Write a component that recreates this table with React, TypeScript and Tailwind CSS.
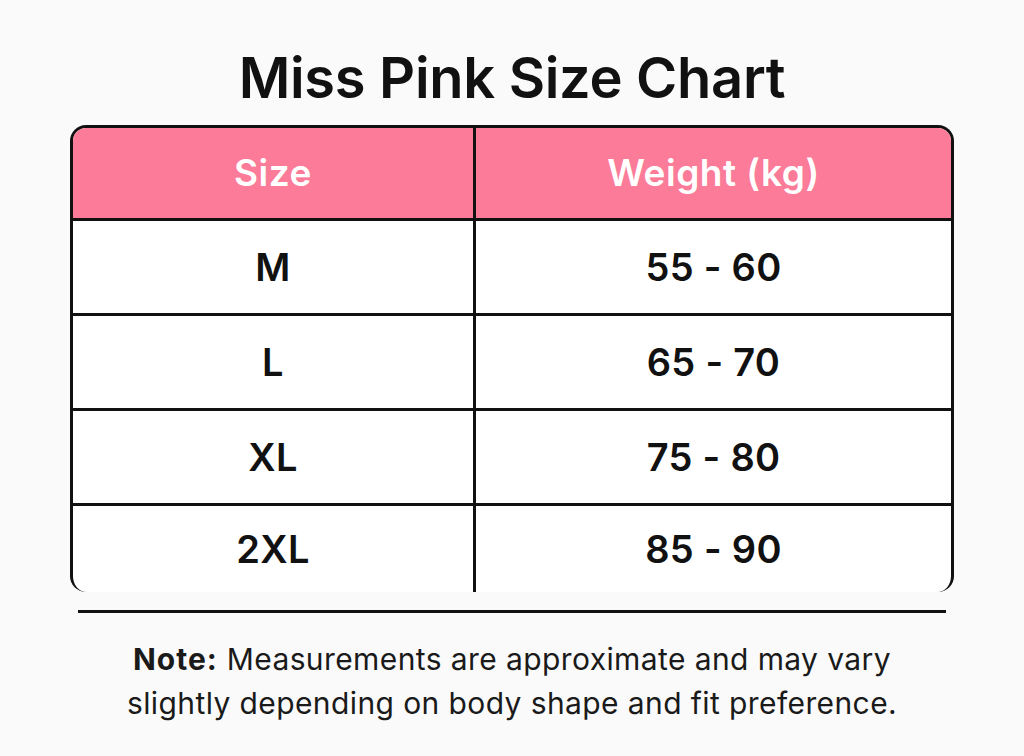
const rows = [
  { size: 'M', weight: '55 - 60' },
  { size: 'L', weight: '65 - 70' },
  { size: 'XL', weight: '75 - 80' },
  { size: '2XL', weight: '85 - 90' },
];

export default function App() {
  return (
    <div
      className="h-[756px] w-[1024px] bg-[#fafafa] text-[#111]"
      style={{ fontFamily: 'Inter, "Noto Sans", sans-serif' }}
    >
      <h1 className="pt-[44px] text-center text-[56px] font-semibold leading-[68px] tracking-[-0.3px]">
        Miss Pink Size Chart
      </h1>
      <div className="mx-[70px] mt-[13px]">
        <div className="rounded-[16px] border-x-[3px] border-t-[3px] border-[#111] bg-white">
          <div className="grid grid-cols-[403px_1fr] overflow-hidden rounded-t-[13px] bg-[#fb7b99] text-[37px] font-semibold tracking-[0.5px] text-white">
            <div className="flex h-[90px] items-center justify-center border-r-[3px] border-[#111]">Size</div>
            <div className="flex h-[90px] items-center justify-center">Weight (kg)</div>
          </div>
          {rows.map((row, i) => (
            <div
              key={row.size}
              className={`grid grid-cols-[403px_1fr] border-t-[3px] border-[#111] text-[38px] font-semibold tracking-[0.3px] ${
                i === rows.length - 1 ? 'h-[89px]' : 'h-[95px]'
              }`}
            >
              <div className="flex items-center justify-center border-r-[3px] border-[#111]">{row.size}</div>
              <div className="flex items-center justify-center">{row.weight}</div>
            </div>
          ))}
        </div>
        <div className="mx-[8px] mt-[18px] h-[3px] bg-[#111]" />
      </div>
      <p className="mt-[24px] text-center text-[30px] leading-[44px] tracking-[0.4px] text-[#1a1a1a]">
        <span className="font-bold tracking-[1px]">Note:</span> Measurements are approximate and may vary
        <br />
        slightly depending on body shape and fit preference.
      </p>
    </div>
  );
}
